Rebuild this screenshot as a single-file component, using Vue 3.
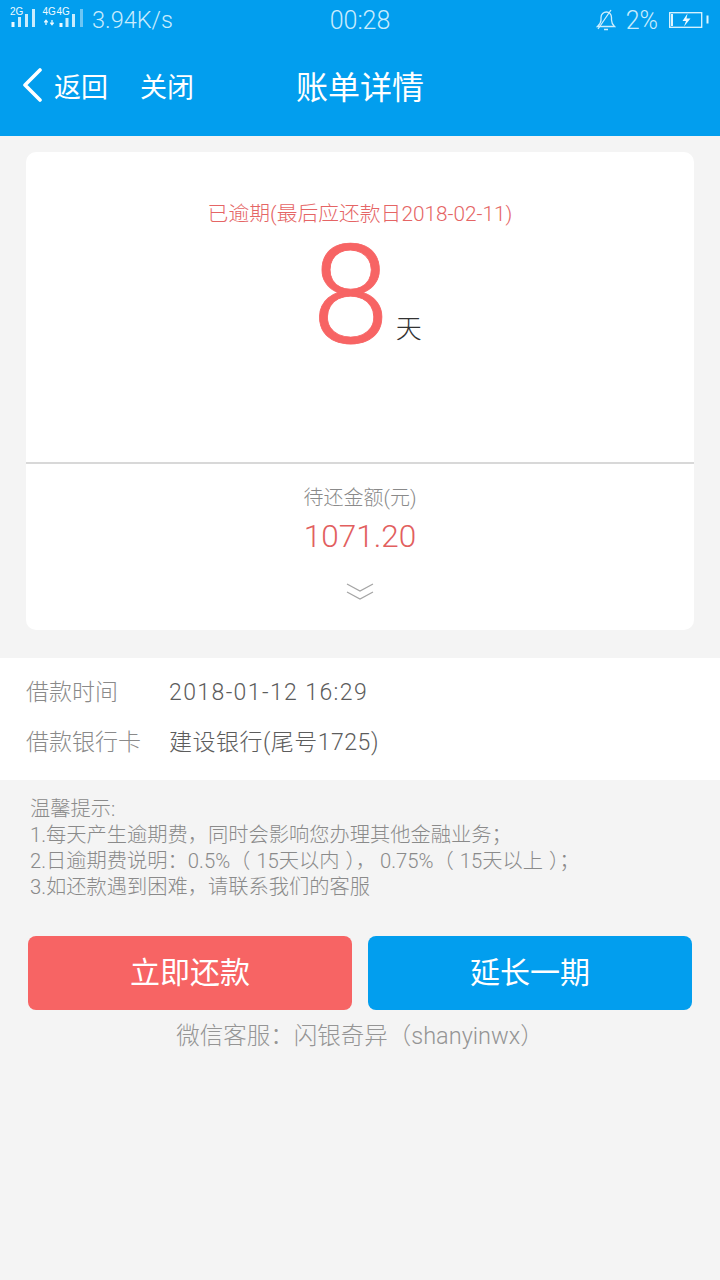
<script setup>
const rows = [
  { label: '借款时间', value: '2018-01-12 16:29', cls: 'date' },
  { label: '借款银行卡', value: '建设银行(尾号1725)', cls: 'bank' }
]
</script>

<template>
  <div class="page">
    <header class="head">
      <div class="status">
        <div class="status-left">
          <svg class="signals" width="76" height="40" viewBox="10 0 76 40">
            <text x="10" y="15" class="net">2G</text>
            <rect x="11.500" y="22" width="3" height="5" fill="#eefaff" />
            <rect x="18" y="17" width="3" height="10" fill="#c9ecfd" />
            <rect x="25" y="14" width="3" height="13" fill="#c9ecfd" />
            <rect x="32" y="9" width="3" height="18" fill="#c9ecfd" />
            <text x="42.500" y="15" class="net">4G</text>
            <text x="56.500" y="15" class="net">4G</text>
            <path d="M46 25v-4.500M44.300 22.300l1.700-2 1.700 2M52 20v4.500M50.300 22.700l1.700 2 1.700-2" stroke="#eefaff" stroke-width="1.300" fill="none" />
            <rect x="59.500" y="23" width="3" height="4" fill="#eefaff" />
            <rect x="65.500" y="18" width="3" height="9" fill="#c9ecfd" />
            <rect x="72" y="14" width="3" height="13" fill="#c9ecfd" />
            <rect x="80" y="9" width="3" height="18" fill="#6dc6f4" />
          </svg>
          <span class="speed">3.94K/s</span>
        </div>
        <span class="clock">00:28</span>
        <div class="status-right">
          <svg class="bell" width="20" height="22" viewBox="0 0 20 22" fill="none" stroke="#cdeefd" stroke-width="1.300">
            <path d="M1.500 17.500h17c-2-2-3-3.500-3-6.500V8.500C15.500 5 13 3 10.500 3 7.500 3 5 5 5 8.500V11c0 3-1.500 4.500-3.500 6.500z" />
            <path d="M8 20.500h4M2 20L15 1" />
          </svg>
          <span class="pct">2%</span>
          <svg class="batt" width="40" height="16" viewBox="0 0 40 16" fill="none">
            <rect x="0.700" y="0.700" width="32" height="14.600" stroke="#dff5fe" stroke-width="1.300" />
            <rect x="37.500" y="3.500" width="2" height="8" fill="#dff5fe" />
            <rect x="2" y="2" width="2" height="12" fill="#dff5fe" />
            <path d="M18.500 1.500l-5 7.500h3.500l-2 5.500 6.500-8h-4z" fill="#eefaff" />
          </svg>
        </div>
      </div>
      <nav class="nav">
        <svg class="back" width="22" height="34" viewBox="0 0 22 34" fill="none" stroke="#fff" stroke-width="3.600" stroke-linecap="round" stroke-linejoin="round">
          <path d="M18 2L3 17l15 15" />
        </svg>
        <span class="nav-link">返回</span>
        <span class="nav-link close">关闭</span>
        <h1 class="title">账单详情</h1>
      </nav>
    </header>

    <main class="body">
      <section class="card">
        <div class="card-top">
          <p class="overdue">已逾期(最后应还款日2018-02-11)</p>
          <div class="days">
            <span class="num">8</span>
            <span class="unit">天</span>
          </div>
        </div>
        <div class="card-bottom">
          <p class="due-label">待还金额(元)</p>
          <p class="due">1071.20</p>
          <svg class="chev" width="28" height="18" viewBox="0 0 28 18" fill="none" stroke="#a5a5a5" stroke-width="1.300">
            <path d="M1 1l13 7 13-7M1 9l13 7 13-7" />
          </svg>
        </div>
      </section>

      <section class="info">
        <div v-for="r in rows" :key="r.label" class="row">
          <span class="row-label">{{ r.label }}</span>
          <span class="row-value" :class="r.cls">{{ r.value }}</span>
        </div>
      </section>

      <section class="tips">
        <p>温馨提示:</p>
        <p>1.每天产生逾期费，同时会影响您办理其他金融业务；</p>
        <p>2.日逾期费说明：0.5%<span class="lp">（</span>15天以内<span class="rp">）</span><span class="cm">，</span>0.75%<span class="lp">（</span>15天以上<span class="rp">）</span>；</p>
        <p>3.如还款遇到困难，请联系我们的客服</p>
      </section>

      <div class="actions">
        <button class="btn red">立即还款</button>
        <button class="btn blue">延长一期</button>
      </div>
      <p class="wechat">微信客服：闪银奇异（shanyinwx）</p>
    </main>
  </div>
</template>

<style>
html, body { margin: 0; background: #f4f4f4; }
</style>

<style scoped>
.page {
  width: 720px;
  height: 1280px;
  overflow: hidden;
  background: #f4f4f4;
  font-family: "Roboto", "Noto Sans CJK SC", sans-serif;
  font-weight: 300;
}
p, h1 { margin: 0; font-weight: 300; }
.head { height: 136px; background: #029eee; color: #fff; }
.status {
  height: 40px;
  display: grid;
  grid-template-columns: 1fr auto 1fr;
  align-items: center;
  color: #c9ecfd;
}
.status-left { display: flex; align-items: center; gap: 6px; padding-left: 10px; }
.signals { flex: none; }
.net { font-size: 10px; fill: #eefaff; font-family: "Liberation Sans", sans-serif; font-weight: 400; }
.speed { font-size: 23.500px; }
.clock { font-size: 25px; }
.status-right { display: flex; justify-content: flex-end; align-items: center; padding-right: 11px; }
.pct { font-size: 25px; margin-left: 10px; margin-right: 11px; }
.nav { height: 96px; display: flex; align-items: center; padding: 0 0 0 22px; position: relative; top: -6px; }
.back { flex: none; margin-top: 6px; }
.nav-link { font-size: 27px; margin-left: 10px; position: relative; top: 3px; font-weight: 400; }
.close { margin-left: 32px; }
.title { font-size: 32px; margin-left: 102px; position: relative; top: 3px; font-weight: 400; }
.body { display: flex; flex-direction: column; }
.card {
  margin: 16px 26px 0;
  height: 478px;
  background: #fff;
  border-radius: 10px;
  display: flex;
  flex-direction: column;
}
.card-top { height: 310px; border-bottom: 2px solid #d8d8d8; display: flex; flex-direction: column; align-items: center; }
.overdue { margin-top: 48px; font-size: 20.800px; line-height: 28px; color: #e56565; }
.days { display: flex; align-items: flex-end; height: 118px; margin-top: 9px; margin-left: 14px; }
.num { font-size: 138px; line-height: 118px; color: #f76464; -webkit-text-stroke: 0.800px #f76464; }
.unit { font-size: 26px; color: #333; margin-left: 7px; line-height: 34px; margin-bottom: 9px; }
.card-bottom { display: flex; flex-direction: column; align-items: center; }
.due-label { margin-top: 20px; font-size: 20px; line-height: 28px; color: #8a8a8a; }
.due { margin-top: 5px; font-size: 31.500px; line-height: 40px; color: #e25f5f; }
.chev { margin-top: 26px; }
.info { margin-top: 28px; height: 122px; background: #fff; padding: 8px 26px 0; box-sizing: border-box; }
.row { display: flex; align-items: center; height: 50px; font-size: 23px; }
.row-label { width: 143px; color: #8a8a8a; margin-top: -2px; }
.row-value { color: #5c5c5c; }
.date { letter-spacing: 1.400px; margin-top: 2px; }
.bank { letter-spacing: 0.500px; margin-top: -2px; }
.tips { margin: 16px 30px 0; font-size: 20.250px; line-height: 26px; color: #8a8a8a; }
.lp { margin-right: 6px; }
.rp { margin-left: 6px; }
.cm { margin-right: 4px; }
.actions { display: flex; gap: 16px; margin: 36px 28px 0; }
.btn {
  flex: 1 1 0;
  height: 74px;
  border: 0;
  border-radius: 8px;
  color: #fff;
  font-size: 30px;
  font-family: inherit;
  font-weight: 400;
  padding: 0 0 6px;
}
.red { background: #f76464; }
.blue { background: #029eee; }
.wechat { margin-top: 9px; text-align: center; font-size: 23.500px; line-height: 34px; color: #959595; }
</style>
